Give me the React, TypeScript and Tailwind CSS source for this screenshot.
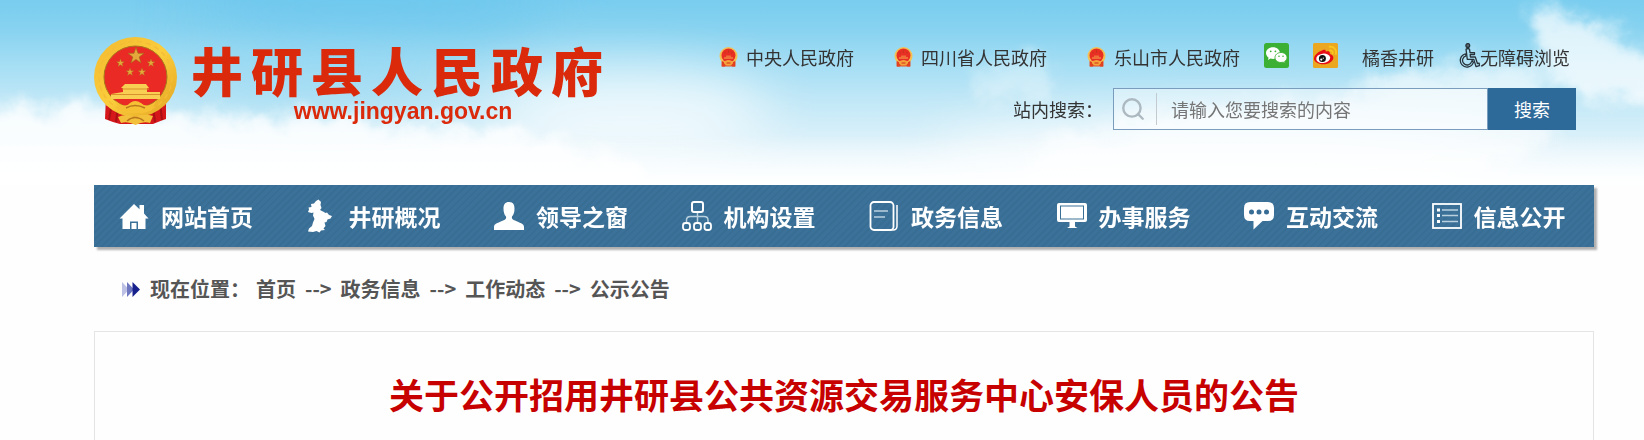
import React from "react";
import { Search } from "lucide-react";

function Sky() {
  return (
    <svg
      aria-hidden="true"
      className="absolute inset-0 h-full w-full"
      viewBox="0 0 1644 200"
      preserveAspectRatio="none"
    >
      <defs>
        <linearGradient id="sky" x1="0" y1="0" x2="0" y2="1">
          <stop offset="0" stopColor="#79cdef" />
          <stop offset="0.15" stopColor="#86d2f0" />
          <stop offset="0.35" stopColor="#a5def4" />
          <stop offset="0.55" stopColor="#c2e8f7" />
          <stop offset="0.75" stopColor="#dbf1fa" />
          <stop offset="1" stopColor="#f6fcff" />
        </linearGradient>
        <linearGradient id="fade" x1="0" y1="0" x2="0" y2="1">
          <stop offset="0" stopColor="#fff" stopOpacity="0" />
          <stop offset="1" stopColor="#fff" stopOpacity="0.9" />
        </linearGradient>
        <filter id="cloud" x="-20%" y="-20%" width="140%" height="140%">
          <feTurbulence type="fractalNoise" baseFrequency="0.03" numOctaves="4" seed="4" result="n" />
          <feGaussianBlur in="SourceGraphic" stdDeviation="8" result="b" />
          <feDisplacementMap in="b" in2="n" scale="36" xChannelSelector="R" yChannelSelector="G" />
        </filter>
        <filter id="soft" x="-50%" y="-50%" width="200%" height="200%">
          <feGaussianBlur stdDeviation="28" />
        </filter>
      </defs>
      <rect width="1644" height="200" fill="url(#sky)" />
      <g filter="url(#soft)">
        <ellipse cx="370" cy="4" rx="180" ry="30" fill="#64c3ec" opacity="0.6" />
        <ellipse cx="320" cy="86" rx="140" ry="26" fill="#94d7f2" opacity="0.75" />
        <ellipse cx="630" cy="120" rx="140" ry="50" fill="#fff" opacity="0.65" />
        <ellipse cx="1230" cy="165" rx="300" ry="34" fill="#fff" opacity="0.8" />
      </g>
      <g filter="url(#cloud)" fill="#fff">
        <path
          d="M-60 114 L90 116 L160 120 L210 130 L290 122 L400 132 L500 142 L620 168 L700 240 L-60 240Z"
          opacity="0.85"
        />
        <path d="M965 80 L1010 66 L1040 58 L1054 80 L1050 104 L1000 112Z" opacity="0.35" />
        <path d="M1200 116 L1320 110 L1400 82 L1470 70 L1540 70 L1560 150 L1400 220 L1000 220 L1050 150Z" opacity="0.6" />
        <path d="M1535 6 L1570 16 L1620 38 L1670 66 L1670 112 L1610 110 L1550 84 L1538 44Z" opacity="0.72" />
      </g>
      <rect y="145" width="1644" height="55" fill="url(#fade)" />
    </svg>
  );
}

const starPath = "M0-10 L2.4-3.2 9.5-3.1 3.8 1.2 5.9 8.1 0 4 -5.9 8.1 -3.8 1.2 -9.5-3.1 -2.4-3.2Z";

function Emblem({ className }: { className: string }) {
  return (
    <svg aria-hidden="true" className={className} viewBox="0 0 83 88">
      <defs>
        <linearGradient id="gold" x1="0" y1="0" x2="1" y2="1">
          <stop offset="0" stopColor="#f2b92e" />
          <stop offset="0.5" stopColor="#fbcd3c" />
          <stop offset="1" stopColor="#e2a322" />
        </linearGradient>
      </defs>
      <path d="M12 60 L30 66 H53 L72 60 L72 82 Q66 84 59 87 L26 87 Q18 85 11 82Z" fill="#d5161b" />
      <path d="M18 66 L15 83 M24 70 L22 85 M66 66 L68 83 M59 70 L61 85" stroke="#a90f14" strokeWidth="2" fill="none" />
      <ellipse cx="41.5" cy="40" rx="41.5" ry="40" fill="url(#gold)" />
      <ellipse cx="41.5" cy="40" rx="36.5" ry="35.5" fill="none" stroke="#f4bd36" strokeWidth="1.5" strokeDasharray="5 4" />
      <ellipse cx="41.5" cy="40" rx="31.5" ry="31" fill="#ea2a25" stroke="#a8761c" strokeWidth="1" />
      <g fill="#e3a93b" stroke="#a8641c" strokeWidth="0.8">
        <path d={starPath} transform="translate(42 19) scale(.85)" />
        <path d={starPath} transform="translate(26.500 26) scale(.42)" />
        <path d={starPath} transform="translate(57 26) scale(.42)" />
        <path d={starPath} transform="translate(36 35) scale(.42)" />
        <path d={starPath} transform="translate(48 35) scale(.42)" />
      </g>
      <path d="M31 47 H52 L55 51 H53 V55 H66 V62 H17 V57 L29 55 V51 H27Z" fill="#f8cf52" />
      <path d="M17 57.500 H66 M28 52 H55" stroke="#d9912b" strokeWidth="1" />
      <path d="M22 64 Q31 72 36 66 Q41 62 47 66 Q53 72 62 64 L58 73 Q48 78 41.500 75 Q34 78 25 73Z" fill="#f6c034" />
      <path d="M24 80 Q32 76 41 80 Q50 76 59 79 L56 86 Q49 84 41.500 88 Q34 84 27 86Z" fill="#f3c03c" />
      <path d="M32 71 Q41 66 51 71 M33 84 Q41 77 50 84" stroke="#b9771d" strokeWidth="1.500" fill="none" />
    </svg>
  );
}

function SmallEmblem() {
  return (
    <svg aria-hidden="true" className="h-5 w-[19px]" viewBox="0 0 19 20">
      <path d="M2.500 13 H16.500 V19.500 H2.500Z" fill="#e2502a" />
      <circle cx="9.500" cy="9" r="9" fill="#f4c052" />
      <circle cx="9.500" cy="8.500" r="7" fill="#e92f24" />
      <path d="M9.500 3 V6 M5.500 5 L6.500 6.500 M13.500 5 L12.500 6.500" stroke="#c9331e" strokeWidth="1.200" />
      <path d="M5 10 H7 V8.500 H12 V10 H14 V12 H5Z" fill="#f0703a" />
      <path d="M5 14.500 Q9.500 11.500 14 14.500 L12 18.500 H7Z" fill="#f5a43b" />
      <path d="M3 14 V19.500 H6 L5 15Z M16 14 V19.500 H13 L14 15Z" fill="#e2401f" />
      <path d="M7.500 16 H11.500" stroke="#d8401f" strokeWidth="1.200" />
    </svg>
  );
}

function WechatIcon() {
  return (
    <svg aria-hidden="true" className="size-[25px]" viewBox="0 0 25 25">
      <rect width="25" height="25" rx="2.500" fill="#3cb034" />
      <path
        d="M9 4.200c-4 0-7 2.600-7 5.900 0 1.900 1 3.500 2.600 4.600l-.7 2.200 2.700-1.300c.8.200 1.600.3 2.400.3 4 0 7-2.600 7-5.800S13 4.200 9 4.200Z"
        fill="#fff"
      />
      <path
        d="M17 9.500c-3.400 0-6 2.200-6 5s2.600 5 6 5c.8 0 1.500-.1 2.200-.3l2.100 1.100-.6-1.900c1.400-.9 2.300-2.300 2.300-3.900 0-2.800-2.600-5-6-5Z"
        fill="#fff"
        stroke="#3cb034"
        strokeWidth="0.900"
      />
      <g fill="#3cb034">
        <circle cx="6.700" cy="8.300" r="0.900" />
        <circle cx="11.400" cy="8.300" r="0.900" />
        <circle cx="15" cy="13.200" r="0.800" />
        <circle cx="19" cy="13.200" r="0.800" />
      </g>
    </svg>
  );
}

function WeiboIcon() {
  return (
    <svg aria-hidden="true" className="size-[25px]" viewBox="0 0 25 25">
      <rect width="25" height="25" rx="1.500" fill="#eaa71f" />
      <path
        d="M9.500 7.200c1.900-.9 3.600-.5 3.300 1.500 2.200-.8 4.400-.6 4 1.500-.1.600 0 .8.600 1 1.800.6 3 1.800 3 3.500 0 3.400-4.600 6.600-10 6.600S1 18.700 1 15.500c0-3 3.800-6.600 8.500-8.300Z"
        fill="#e60d14"
      />
      <ellipse cx="10.200" cy="15.300" rx="7" ry="4.700" transform="rotate(-7 10.200 15.300)" fill="#fff" />
      <circle cx="9.400" cy="15.600" r="3.500" fill="#111" />
      <circle cx="8.300" cy="16.600" r="1.100" fill="#fff" />
      <circle cx="10.300" cy="15.200" r="0.600" fill="#fff" />
      <path
        d="M16.500 3.800c4.200-.6 7.300 2.600 6.400 7.200M16.700 7.500c2-.3 3.400 1.100 3 3.100"
        fill="none"
        stroke="#f8c61c"
        strokeWidth="1.900"
        strokeLinecap="round"
      />
    </svg>
  );
}

function WheelchairIcon() {
  return (
    <svg
      aria-hidden="true"
      className="h-[25px] w-[22px]"
      viewBox="0 0 22 25"
      fill="none"
      stroke="#27333b"
      strokeWidth="1.300"
      strokeLinejoin="round"
      strokeLinecap="round"
    >
      <circle cx="9.800" cy="2.500" r="1.900" fill="#5c6b73" />
      <path d="M8 6.200 Q9.800 4.800 11.500 6.200 L12 9.600 H16.500 V11.500 H12.200 L12.400 14 H17.300 L19.400 20.500 L21.200 20.200 L21.400 22.600 L18 23.600 L15.800 16.400 H9.300 Z" />
      <path d="M7.600 10.800 A6.700 6.700 0 1 0 15.400 19.400 M8 12.900 A4.600 4.600 0 1 0 13.600 18.600 M7.600 10.800 L8 12.900 M15.400 19.400 L13.900 17.200" />
    </svg>
  );
}

const iconClass = "size-[30px] shrink-0";

const icons = {
  home: (
    <svg aria-hidden="true" className={iconClass} viewBox="0 0 30 30" fill="#fff">
      <path d="M15 3 L20.500 8.300 V4 H25 V12.500 L29.500 17.500 H26.500 V28 H19 V20.500 H11 V28 H3.500 V17.500 H.5Z" />
      <rect x="12.500" y="22" width="5" height="6" />
    </svg>
  ),
  map: (
    <svg aria-hidden="true" className="h-[34px] w-[30px] shrink-0" viewBox="0 0 30 34" fill="#fff">
      <path d="M9 2 L11.500 .5 L13 2 L14 3 L13.500 6 L14.500 9 L13 11 L16 12.500 L18.500 14 L20 13.500 L22 16 L25 17 L23.500 19.500 L20.500 20.500 L19.500 23 L17.500 23.500 L18.500 27 L16.500 29.500 L18 31 L14 31.500 L12.500 33.500 L9.500 32 L6 33 L1 32.500 L2 29.500 L5 27 L6 23.500 L7.500 20 L6 16.500 L6.500 13.500 L4.500 14 L1 13 L2 10.500 L1.500 8.500 L4.500 8 L4 5 L7 4.500Z" />
    </svg>
  ),
  person: (
    <svg aria-hidden="true" className={iconClass} viewBox="0 0 30 30" fill="#fff">
      <path d="M15 1 C19 1 20.500 3.500 20.500 7.500 C20.500 11 19.800 13.500 18 15.500 C17.500 17.500 18.500 18.500 21 19.500 C25.500 21.800 30 22.500 30 26 V29 H0 V26 C0 22.500 4.500 21.800 9 19.500 C11.500 18.500 12.500 17.500 12 15.500 C10.200 13.500 9.500 11 9.500 7.500 C9.500 3.500 11 1 15 1Z" />
    </svg>
  ),
  org: (
    <svg aria-hidden="true" className={iconClass} viewBox="0 0 30 30" fill="none" stroke="#fff">
      <rect x="10" y="1" width="11" height="10" rx="2" strokeWidth="2" />
      <g stroke="#b9d0df" strokeWidth="1.500">
        <path d="M15.500 12 V22 M4.500 22 V19 Q4.500 15.500 8.500 15.500 H22 Q26 15.500 26 19 V22" />
      </g>
      <g strokeWidth="1.800">
        <rect x="1" y="22" width="7" height="7" rx="2.500" />
        <rect x="12" y="22" width="7" height="7" rx="2.500" />
        <rect x="22.500" y="22" width="6.500" height="7" rx="2.500" />
      </g>
    </svg>
  ),
  doc: (
    <svg aria-hidden="true" className={iconClass} viewBox="0 0 30 30" fill="none" stroke="#fff" strokeWidth="1.800">
      <rect x="1.500" y="1" width="23" height="28" rx="3.500" />
      <path d="M28 4 V25 Q28 29 24 29 H21" strokeWidth="1.500" />
      <path d="M5 10 H19 M5 16 H16" stroke="#b9d0df" strokeWidth="1.600" />
    </svg>
  ),
  monitor: (
    <svg aria-hidden="true" className={iconClass} viewBox="0 0 30 30" fill="#fff">
      <path fillRule="evenodd" d="M2 2 H28 Q30 2 30 4 V19 Q30 21 28 21 H2 Q0 21 0 19 V4 Q0 2 2 2Z M3 4.500 V18.500 H27 V4.500Z" />
      <rect x="4" y="5.500" width="22" height="12" />
      <path d="M12.500 21 H18 V25.500 L20.500 27 H10 L12.500 25.500Z" />
    </svg>
  ),
  chat: (
    <svg aria-hidden="true" className={iconClass} viewBox="0 0 30 30">
      <path d="M6 1 H24 Q30 1 30 7 V14 Q30 20 24 20 H18.500 L9.500 28.500 V20 H6 Q0 20 0 14 V7 Q0 1 6 1Z" fill="#fff" />
      <g fill="#376c95">
        <circle cx="7.500" cy="11" r="2.500" />
        <circle cx="15" cy="11" r="2.500" />
        <circle cx="22.500" cy="11" r="2.500" />
      </g>
    </svg>
  ),
  list: (
    <svg aria-hidden="true" className={iconClass} viewBox="0 0 30 30" fill="#fff">
      <rect x="1" y="3" width="28" height="24" fill="none" stroke="#fff" strokeWidth="1.800" />
      <g>
        <rect x="5" y="7.500" width="3" height="3" />
        <rect x="5" y="13" width="3" height="3" />
        <rect x="5" y="19" width="3" height="3" />
      </g>
      <path d="M10 9 H26 M10 14.500 H26 M10 20.500 H26" stroke="#b9d0df" strokeWidth="1.500" />
    </svg>
  ),
};

const navItems: { label: string; icon: keyof typeof icons }[] = [
  { label: "网站首页", icon: "home" },
  { label: "井研概况", icon: "map" },
  { label: "领导之窗", icon: "person" },
  { label: "机构设置", icon: "org" },
  { label: "政务信息", icon: "doc" },
  { label: "办事服务", icon: "monitor" },
  { label: "互动交流", icon: "chat" },
  { label: "信息公开", icon: "list" },
];

const crumbs = ["首页", "政务信息", "工作动态", "公示公告"];

function TopLinks() {
  return (
    <ul className="mr-[6px] flex h-[25px] items-center text-lg leading-[25px] text-[#333]">
      {["中央人民政府", "四川省人民政府", "乐山市人民政府"].map((name, i) => (
        <li key={name} className={i < 2 ? "mr-10" : "mr-6"}>
          <a href="#" className="flex items-center gap-2 pt-[3px]">
            <SmallEmblem />
            {name}
          </a>
        </li>
      ))}
      <li className="mr-6">
        <a href="#" aria-label="微信">
          <WechatIcon />
        </a>
      </li>
      <li className="mr-6">
        <a href="#" aria-label="微博">
          <WeiboIcon />
        </a>
      </li>
      <li className="mr-6">
        <a href="#" className="flex pt-[3px]">
          橘香井研
        </a>
      </li>
      <li>
        <a href="#" className="flex items-center">
          <WheelchairIcon />
          <span className="pt-[3px]">无障碍浏览</span>
        </a>
      </li>
    </ul>
  );
}

function SearchForm() {
  return (
    <form className="flex items-center text-lg text-[#333]" onSubmit={(e) => e.preventDefault()}>
      <label htmlFor="site-search" className="mr-[10px]">
        站内搜索：
      </label>
      <div className="flex h-[42px] w-[375px] items-center border border-[#7b9dbd] bg-white/40">
        <span className="ml-1 flex h-8 w-[39px] items-center border-r border-[#c4cbd0] pl-[2px]">
          <Search aria-hidden="true" className="size-[26px] text-[#adb9c0]" strokeWidth={2.2} />
        </span>
        <input
          id="site-search"
          type="text"
          placeholder="请输入您要搜索的内容"
          className="h-full min-w-0 flex-1 bg-transparent px-[14px] outline-none placeholder:text-[#757575]"
        />
      </div>
      <button type="submit" className="h-[42px] w-[88px] bg-[#2d6a99] text-white">
        搜索
      </button>
    </form>
  );
}

export default function App() {
  return (
    <div className="flex min-h-screen flex-col bg-[#fefefe] font-['Noto_Sans_CJK_SC',sans-serif]">
      <div className="relative pr-[50px] pl-[94px]">
        <Sky />
        <header className="relative flex h-[185px] items-start justify-between pt-[37px] pr-[18px]">
          <a href="#" className="flex items-start gap-[14px]">
            <Emblem className="h-[88px] w-[83px]" />
            <span className="flex flex-col pt-[3px] text-[#db2a0b]">
              <span className="flex gap-2 text-[52px] leading-[60px] font-black">
                {Array.from("井研县人民政府").map((ch, i) => (
                  <span key={i}>{ch}</span>
                ))}
              </span>
              <span className="pl-3 text-center font-['Liberation_Sans',sans-serif] text-[23px] leading-[22px] font-bold">
                www.jingyan.gov.cn
              </span>
            </span>
          </a>
          <div className="flex flex-col items-end gap-5 pt-[6px]">
            <TopLinks />
            <SearchForm />
          </div>
        </header>
      </div>

      <nav className="relative mr-[50px] ml-[94px] bg-[#3b7097] bg-[repeating-linear-gradient(135deg,#3c7299_0px,#3c7299_3px,#386d94_3px,#386d94_5px)] shadow-[3px_3px_2px_#b0b0b0]">
        <ul className="grid h-[62px] grid-cols-8">
          {navItems.map((item) => (
            <li key={item.label}>
              <a
                href="#"
                className="flex h-full items-center gap-3 pl-[25px] text-[23px] leading-8 font-bold whitespace-nowrap text-white"
              >
                {icons[item.icon]}
                {item.label}
              </a>
            </li>
          ))}
        </ul>
      </nav>

      <div className="mt-6 mr-[50px] ml-[94px] flex h-9 items-center pl-7 text-xl font-bold text-[#555]">
        <svg aria-hidden="true" className="mr-[10px] h-[15px] w-[18px]" viewBox="0 0 18 15">
          <path d="M0 0 L7 7.500 L0 15Z" fill="#bcc0e4" />
          <path d="M5 0 L12 7.500 L5 15Z" fill="#6d77c0" />
          <path d="M10.500 0 L18 7.500 L10.500 15Z" fill="#16218c" />
        </svg>
        <span className="mr-[6px]">现在位置：</span>
        <ol className="flex gap-[9px]">
          {crumbs.map((c, i) => (
            <li key={c} className="flex gap-[9px]">
              {i > 0 && <span aria-hidden="true">--&gt;</span>}
              <a href="#">{c}</a>
            </li>
          ))}
        </ol>
      </div>

      <main className="mt-6 mr-[50px] ml-[94px] flex-1 border border-b-0 border-[#e5e5e5] px-6 pt-[38px]">
        <h1 className="text-center text-[35px] leading-[48px] font-bold text-[#c70000]">
          关于公开招用井研县公共资源交易服务中心安保人员的公告
        </h1>
      </main>
    </div>
  );
}
